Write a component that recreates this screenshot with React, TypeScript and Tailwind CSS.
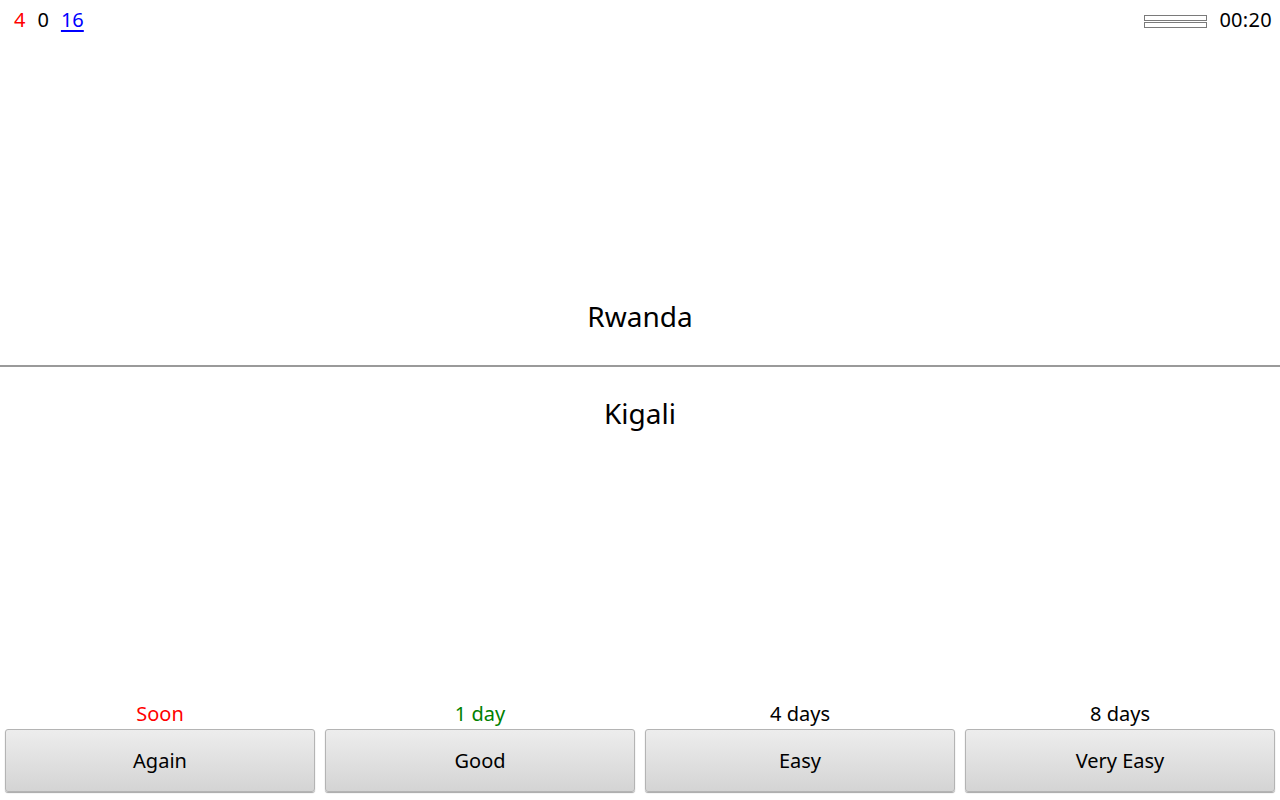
import React from "react";

const font = { fontFamily: '"Noto Sans", "Open Sans", sans-serif' };

function Btn({ label, sub, subColor }: { label: string; sub: string; subColor: string }) {
  return (
    <div className="flex flex-col items-center">
      <div className={`h-[24px] leading-[24px] text-[20px] mb-[3px] ${subColor}`}>{sub}</div>
      <div className="w-full h-[63px] flex items-center justify-center text-[20px] text-black rounded-[3px] border border-[#b4b4b4] bg-gradient-to-b from-[#ededed] to-[#d4d4d4] shadow-[0_1px_1px_rgba(0,0,0,0.35)]">
        {label}
      </div>
    </div>
  );
}

export default function App() {
  return (
    <div className="w-[1280px] h-[800px] bg-white flex flex-col overflow-hidden" style={font}>
      <div className="h-[42px] flex items-start justify-between px-[14px] pt-[6px]">
        <div className="flex gap-[12px] text-[20px] leading-[28px]">
          <span className="text-[#ff0000]">4</span>
          <span className="text-black">0</span>
          <span className="text-[#0000ff] underline underline-offset-[3px]">16</span>
        </div>
        <div className="flex items-center gap-[12px] mr-[-6px]">
          <div className="flex flex-col gap-[1px] mt-[2px]">
            <div className="w-[63px] h-[6px] border border-[#7a7a7a]" />
            <div className="w-[63px] h-[6px] border border-[#7a7a7a]" />
          </div>
          <span className="text-[20px] leading-[28px] text-black tracking-[0.3px]">00:20</span>
        </div>
      </div>
      <div className="mt-[255px] text-center text-[28px] leading-[38px] text-black">Rwanda</div>
      <div className="mt-[30px] h-[2px] bg-[#9a9a9a]" />
      <div className="mt-[27px] text-center text-[28px] leading-[38px] text-black">Kigali</div>
      <div className="mt-auto grid grid-cols-4 gap-[10px] px-[5px] pb-[8px]">
        <Btn label="Again" sub="Soon" subColor="text-[#ff0000]" />
        <Btn label="Good" sub="1 day" subColor="text-[#008000]" />
        <Btn label="Easy" sub="4 days" subColor="text-black" />
        <Btn label="Very Easy" sub="8 days" subColor="text-black" />
      </div>
    </div>
  );
}
